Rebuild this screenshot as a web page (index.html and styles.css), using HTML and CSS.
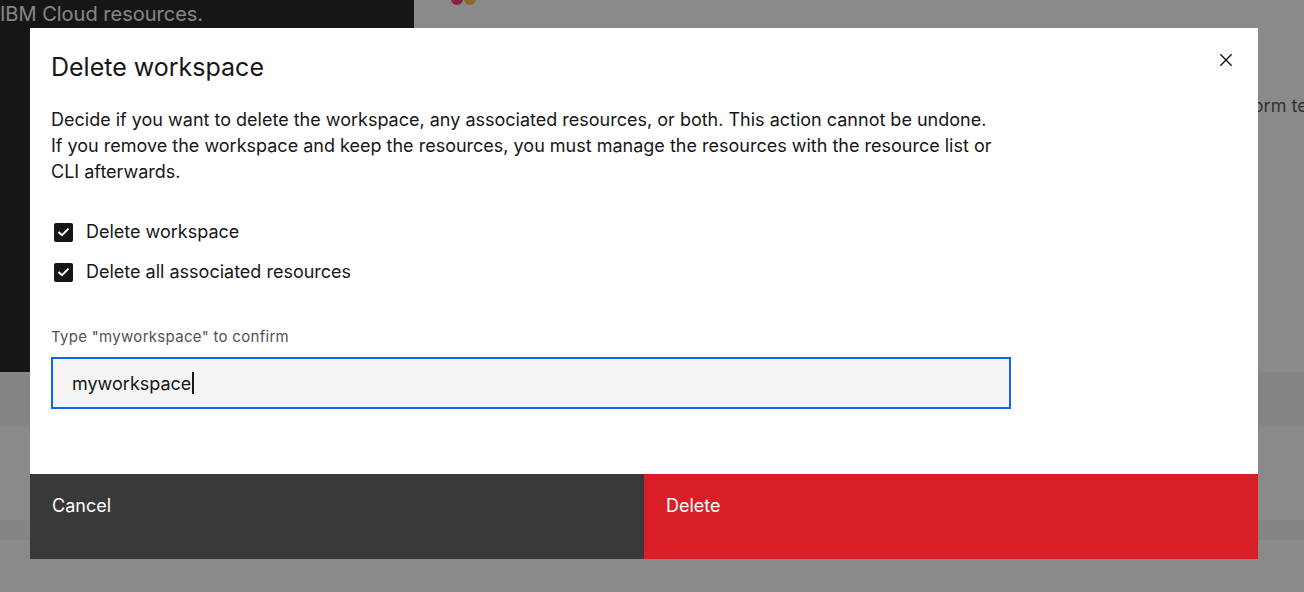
FILE: index.html
```html
<!DOCTYPE html>
<html lang="en">
<head>
<meta charset="utf-8">
<title>Delete workspace</title>
<link rel="stylesheet" href="styles.css">
</head>
<body>
<div class="page">
  <div class="top">
    <aside class="side">
      <p class="side-text">IBM Cloud resources.</p>
    </aside>
    <main class="hero">
      <div class="dots"><span class="dot dot-pink"></span><span class="dot dot-gold"></span></div>
      <p class="hero-text">Terraform templates</p>
    </main>
  </div>
  <div class="rows">
    <div class="row row-a"></div>
    <div class="row row-b"></div>
    <div class="row row-c"></div>
    <div class="row row-d"></div>
  </div>
</div>

<div class="overlay">
  <div class="modal" role="dialog" aria-labelledby="modal-title">
    <header class="modal-header">
      <h2 class="modal-title" id="modal-title">Delete workspace</h2>
      <button class="modal-close" aria-label="Close">
        <svg width="16" height="16" viewBox="0 0 16 16" aria-hidden="true"><path d="M1.5 1.5 L14.5 14.5 M14.5 1.5 L1.5 14.5" stroke="#161616" stroke-width="1.6" fill="none"/></svg>
      </button>
    </header>
    <div class="modal-body">
      <p class="modal-text">Decide if you want to delete the workspace, any associated resources, or both. This action cannot be undone.<br>If you remove the workspace and keep the resources, you must manage the resources with the resource list or<br>CLI afterwards.</p>
      <div class="checks">
        <label class="check">
          <span class="check-box"><svg width="13" height="10" viewBox="0 0 13 10" aria-hidden="true"><path d="M1.5 5 L5 8.2 L11.5 1.6" stroke="#fff" stroke-width="2" fill="none"/></svg></span>
          <span class="check-label">Delete workspace</span>
        </label>
        <label class="check">
          <span class="check-box"><svg width="13" height="10" viewBox="0 0 13 10" aria-hidden="true"><path d="M1.5 5 L5 8.2 L11.5 1.6" stroke="#fff" stroke-width="2" fill="none"/></svg></span>
          <span class="check-label">Delete all associated resources</span>
        </label>
      </div>
      <div class="field">
        <div class="field-label">Type "myworkspace" to confirm</div>
        <div class="field-input"><span>myworkspace</span><span class="caret"></span></div>
      </div>
    </div>
    <footer class="modal-footer">
      <button class="btn btn-secondary">Cancel</button>
      <button class="btn btn-danger">Delete</button>
    </footer>
  </div>
</div>
</body>
</html>
```

FILE: styles.css
```css
* { box-sizing: border-box; }

html, body {
  margin: 0;
  padding: 0;
  width: 1304px;
  height: 592px;
  overflow: hidden;
  background: #ffffff;
  font-family: "Inter", "Noto Sans", "Liberation Sans", sans-serif;
  color: #161616;
}

.page {
  width: 1304px;
  height: 592px;
  display: flex;
  flex-direction: column;
  overflow: hidden;
}

.top {
  display: flex;
  height: 372px;
  flex: none;
}

.side {
  width: 414px;
  flex: none;
  background: #161616;
}

.side-text {
  margin: 0;
  font-size: 20px;
  line-height: 29px;
  color: #f4f4f4;
  white-space: nowrap;
}

.hero {
  flex: 1;
  min-width: 0;
  padding-left: 37px;
  background: #ffffff;
  overflow: hidden;
}

.dots {
  display: flex;
  gap: 1px;
  margin-top: -7px;
}

.dot {
  width: 12px;
  height: 12px;
  border-radius: 50%;
}

.dot-pink { background: #ff2d7e; }
.dot-gold { background: #ffbf3f; }

.hero-text {
  margin: 89px 0 0 751px;
  font-size: 18px;
  line-height: 24px;
  color: #525252;
  white-space: nowrap;
}

.rows {
  flex: 1;
  display: flex;
  flex-direction: column;
}

.row-a { height: 54px; background: #f4f4f4; }
.row-b { height: 94px; background: #ffffff; }
.row-c { height: 20px; background: #f4f4f4; }
.row-d { flex: 1; background: #ffffff; }

.overlay {
  position: fixed;
  inset: 0;
  background: rgba(22, 22, 22, 0.5);
}

.modal {
  position: absolute;
  left: 30px;
  top: 28px;
  width: 1228px;
  height: 531px;
  background: #ffffff;
  display: flex;
  flex-direction: column;
}

.modal-header {
  position: relative;
  padding: 24px 21px 0;
}

.modal-title {
  margin: 0;
  font-size: 25px;
  line-height: 30px;
  font-weight: 400;
  color: #161616;
}

.modal-close {
  position: absolute;
  top: 8px;
  right: 8px;
  width: 48px;
  height: 48px;
  border: 0;
  background: transparent;
  padding: 0;
  display: flex;
  align-items: center;
  justify-content: center;
}

.modal-close svg {
  width: 14px;
  height: 14px;
}

.modal-body {
  flex: 1;
  padding: 0 21px;
}

.modal-text {
  margin: 25px 0 0;
  font-size: 18px;
  line-height: 26px;
  color: #161616;
  white-space: nowrap;
}

.checks {
  margin-top: 35px;
  display: flex;
  flex-direction: column;
  gap: 16px;
}

.check {
  display: flex;
  align-items: center;
  height: 24px;
  padding-left: 3px;
  gap: 13px;
}

.check-box {
  width: 19px;
  height: 19px;
  border-radius: 2px;
  background: #161616;
  display: flex;
  align-items: center;
  justify-content: center;
}

.check-label {
  font-size: 18px;
  line-height: 24px;
  color: #161616;
}

.field {
  margin-top: 44px;
}

.field-label {
  font-size: 15px;
  line-height: 18px;
  color: #525252;
  letter-spacing: 0.3px;
}

.field-input {
  margin-top: 11px;
  width: 960px;
  height: 52px;
  border: 2px solid #0f62fe;
  background: #f4f4f4;
  padding: 0 19px;
  display: flex;
  align-items: center;
  font-size: 18px;
  color: #161616;
}

.caret {
  width: 2px;
  height: 22px;
  background: #161616;
  margin-left: 1px;
}

.modal-footer {
  display: flex;
  height: 85px;
  flex: none;
}

.btn {
  flex: 1;
  border: 0;
  margin: 0;
  text-align: left;
  padding: 22px 22px 0;
  font-family: inherit;
  font-size: 18px;
  line-height: 20px;
  color: #ffffff;
  display: flex;
  align-items: flex-start;
}

.btn-secondary { background: #393939; }
.btn-danger { background: #da1e28; }
```
